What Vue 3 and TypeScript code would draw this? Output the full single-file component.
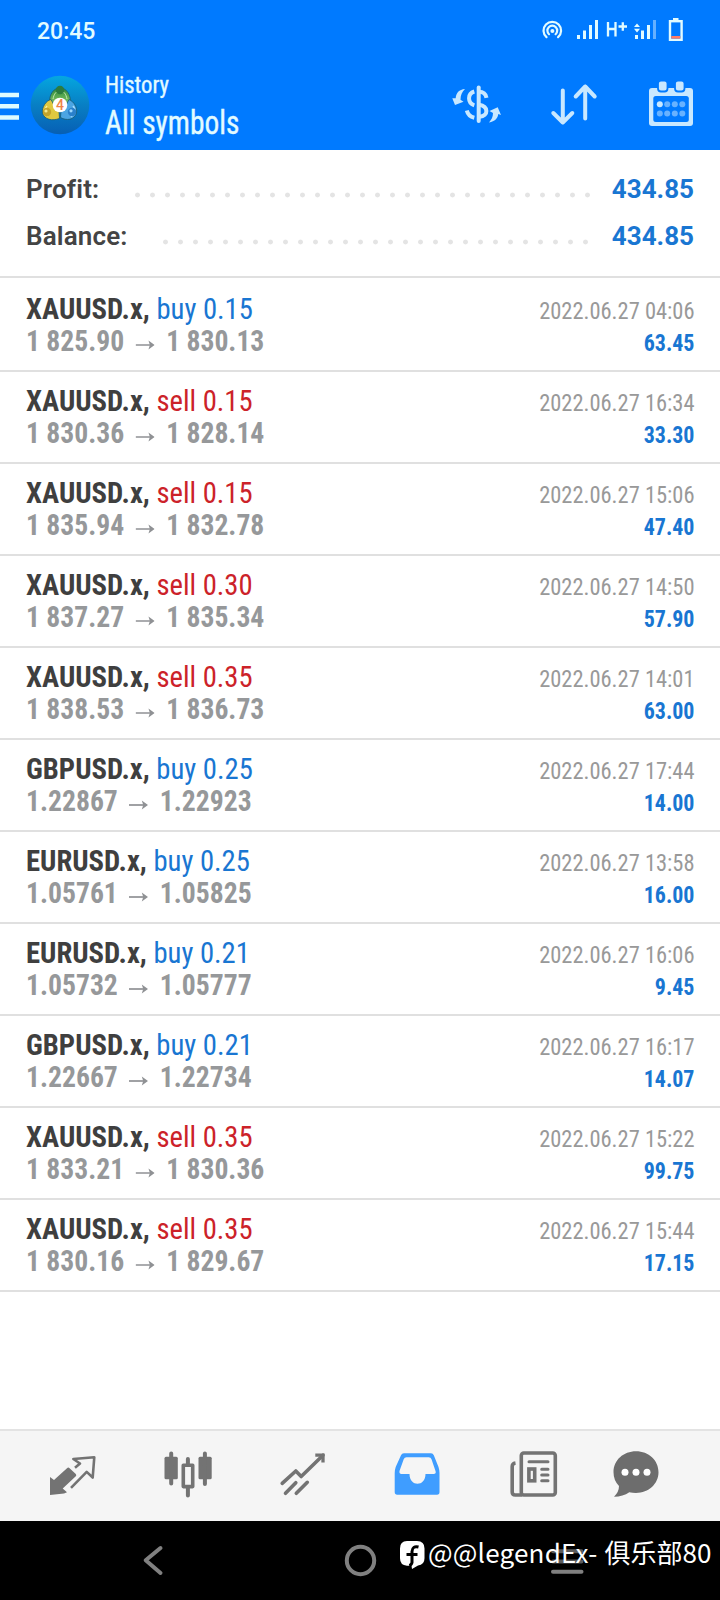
<script setup lang="ts">
interface Deal {
  symbol: string
  side: 'buy' | 'sell'
  volume: string
  open: string
  close: string
  time: string
  profit: string
}

const deal = (
  symbol: string, side: 'buy' | 'sell', volume: string,
  open: string, close: string, time: string, profit: string,
): Deal => ({ symbol, side, volume, open, close, time: `2022.06.27 ${time}`, profit })

const deals: Deal[] = [
  deal('XAUUSD.x', 'buy', '0.15', '1 825.90', '1 830.13', '04:06', '63.45'),
  deal('XAUUSD.x', 'sell', '0.15', '1 830.36', '1 828.14', '16:34', '33.30'),
  deal('XAUUSD.x', 'sell', '0.15', '1 835.94', '1 832.78', '15:06', '47.40'),
  deal('XAUUSD.x', 'sell', '0.30', '1 837.27', '1 835.34', '14:50', '57.90'),
  deal('XAUUSD.x', 'sell', '0.35', '1 838.53', '1 836.73', '14:01', '63.00'),
  deal('GBPUSD.x', 'buy', '0.25', '1.22867', '1.22923', '17:44', '14.00'),
  deal('EURUSD.x', 'buy', '0.25', '1.05761', '1.05825', '13:58', '16.00'),
  deal('EURUSD.x', 'buy', '0.21', '1.05732', '1.05777', '16:06', '9.45'),
  deal('GBPUSD.x', 'buy', '0.21', '1.22667', '1.22734', '16:17', '14.07'),
  deal('XAUUSD.x', 'sell', '0.35', '1 833.21', '1 830.36', '15:22', '99.75'),
  deal('XAUUSD.x', 'sell', '0.35', '1 830.16', '1 829.67', '15:44', '17.15'),
]

const summary = [
  { label: 'Profit:', value: '434.85', dots: 'dots-profit' },
  { label: 'Balance:', value: '434.85', dots: 'dots-balance' },
]
</script>

<template>
  <div class="screen">
    <header class="top">
      <div class="status">
        <span class="clock">20:45</span>
        <svg class="status-icons" width="150" height="30" viewBox="540 15 150 30">
          <g fill="none" stroke="#e2fbff" stroke-width="2.2" stroke-linecap="round">
            <path d="M546.5 37.2a8.8 8.8 0 1 1 11.6 0" />
            <path d="M549 34.2a4.9 4.9 0 1 1 6.6 0" />
          </g>
          <circle cx="552.4" cy="31" r="2" fill="#e2fbff" />
          <g fill="#e2fbff">
            <rect x="577" y="35" width="3" height="4" />
            <rect x="583" y="30.5" width="3" height="8.5" />
            <rect x="589" y="25" width="3" height="14" />
            <rect x="595" y="20" width="3" height="19" />
            <rect x="635" y="35" width="3" height="4" />
            <rect x="641" y="30.5" width="3" height="8.5" />
            <rect x="647" y="25" width="3" height="14" />
            <path d="M634 27l3-3.600 3 3.600zM634 28.800h6l-3 3.600z" />
            <rect x="673" y="18" width="5.500" height="3" />
          </g>
          <rect x="653" y="20" width="3" height="19" fill="#66b0ff" />
          <path d="M608 22v14.500M615.500 22v14.500M608 29h7.500M618.500 26.500h8.500M622.800 22.200v8.600" fill="none" stroke="#e2fbff" stroke-width="2.300" />
          <rect x="670" y="21.200" width="11.600" height="18.600" fill="none" stroke="#e2fbff" stroke-width="2.400" />
          <rect x="671.300" y="36" width="9" height="2.600" fill="#ff7a66" />
        </svg>
      </div>
      <div class="bar">
        <svg class="burger" width="20" height="30" viewBox="0 0 20 30">
          <path d="M0 3h19M0 14.300h19M0 25.500h19" stroke="#ddfaff" stroke-width="4.400" />
        </svg>
        <svg class="logo" width="60" height="60" viewBox="0 0 60 60">
          <defs>
            <linearGradient id="disc" x1="0" y1="0" x2="0" y2="1">
              <stop offset="0" stop-color="#05a7e0" />
              <stop offset=".5" stop-color="#087fc4" />
              <stop offset="1" stop-color="#075fb4" />
            </linearGradient>
            <linearGradient id="green" x1="0" y1="0" x2="0" y2="1">
              <stop offset="0" stop-color="#2e8a3c" />
              <stop offset="1" stop-color="#8fce6a" />
            </linearGradient>
          </defs>
          <circle cx="30" cy="30" r="29.300" fill="url(#disc)" />
          <g stroke="#165a72" stroke-width=".8">
            <path d="M30 13c7 0 10.500 7 10.500 14l-5 4H24l-4.500-4C19.500 20 23 13 30 13z" fill="url(#green)" />
            <path d="M21 24.500c-5 1-9.500 8-8.500 13.500 2 7 10 8 17 5.500L29 36l-5-6z" fill="#dfc83f" />
            <path d="M39 24.500c5 2 8.500 8 7.500 13.500-2 7-10 8-16 4.500L31 36l5-6z" fill="#4ba5e3" />
          </g>
          <path d="M23 24c1-5 3-8 7-8s6 3 7 8" fill="none" stroke="#c5ebb0" stroke-width="1" />
          <path d="M17 31c-3 3-2 8 1 10" fill="none" stroke="#fff09a" stroke-width="1.500" />
          <path d="M43 31c3 3 2 8-2 11" fill="none" stroke="#a6dcff" stroke-width="1.500" />
          <circle cx="30" cy="15" r="4.300" fill="#2c7c3e" />
          <circle cx="17" cy="37" r="4.200" fill="#c3a32b" />
          <circle cx="16" cy="36" r="1.600" fill="#f6e98b" />
          <circle cx="42" cy="37" r="4.200" fill="#2a80cb" />
          <circle cx="41" cy="35.800" r="1.600" fill="#9cd8ff" />
          <circle cx="30" cy="30" r="7.300" fill="#fff" />
          <text x="30" y="35" text-anchor="middle" font-size="14" font-weight="500" fill="#ee8448">4</text>
        </svg>
        <div class="titles">
          <span class="subtitle">History</span>
          <span class="title">All symbols</span>
        </div>
        <div class="actions">
          <svg width="56" height="50" viewBox="0 0 56 50">
            <g fill="none" stroke="#c9e8ff" stroke-width="4">
              <path d="M28.700 7.500v33.500" stroke-linecap="round" />
              <path d="M24.300 11.500c-7 2-7 11.500 0 13.800M29 11.800c4 0 6.700 2 7.500 6M29 24.800c9.500 1.500 10 11 .5 12M16.800 30.500c1 4 3.500 6.300 7.500 7.300" />
            </g>
            <g fill="#c9e8ff">
              <path d="M15 9c-6 .5-9 4-9.300 9.300H2.300L5 25l8.500-3.300-3-2C10.500 15 12 12 15 9z" />
              <path d="M39 42.500c6-1 8.800-4.500 9.300-8.500l2.700 1-3.300-7.700L39.500 31l3.500 2c0 4-1.500 6.500-4 9.500z" />
            </g>
          </svg>
          <svg width="56" height="50" viewBox="0 0 56 50">
            <g fill="none" stroke="#c9e8ff" stroke-width="4" stroke-linecap="round" stroke-linejoin="round">
              <path d="M14.800 10.500v32M5.300 33l9.500 9.500 9.500-9.500" />
              <path d="M37.200 38.500v-32M27.700 16.500l9.500-10 9.500 10" />
            </g>
          </svg>
          <svg width="56" height="50" viewBox="0 0 56 50">
            <rect x="3" y="8" width="44" height="38" rx="3" fill="#c9e8ff" />
            <rect x="7.300" y="16" width="35.500" height="26" rx="2.500" fill="#007aff" />
            <g fill="#c9e8ff" stroke="#007aff" stroke-width="1.800">
              <rect x="12" y=".5" width="9.500" height="11" rx="3" />
              <rect x="29" y=".5" width="9.500" height="11" rx="3" />
            </g>
            <circle cx="13.800" cy="24.200" r="3" fill="#c9e8ff" />
            <g fill="#68b2ff">
              <circle cx="21.200" cy="24.200" r="3" /><circle cx="28.800" cy="24.200" r="3" /><circle cx="36.300" cy="24.200" r="3" />
              <circle cx="13.800" cy="33.500" r="3" /><circle cx="21.200" cy="33.500" r="3" /><circle cx="28.800" cy="33.500" r="3" /><circle cx="36.300" cy="33.500" r="3" />
            </g>
          </svg>
        </div>
      </div>
    </header>

    <section class="summary">
      <div v-for="s in summary" :key="s.label" class="sum-row">
        <span class="sum-label">{{ s.label }}</span>
        <span class="dots" :class="s.dots"></span>
        <span class="sum-value">{{ s.value }}</span>
      </div>
    </section>

    <main class="deals">
      <div v-for="(d, i) in deals" :key="i" class="deal">
        <div class="left">
          <div class="line head"><b>{{ d.symbol }},</b> <span :class="d.side">{{ d.side }} {{ d.volume }}</span></div>
          <div class="line prices">
            <span>{{ d.open }}</span>
            <svg width="20" height="12" viewBox="0 0 20 12"><path d="M0 6h18" stroke="#8f9194" stroke-width="1.700" /><path d="M13.500 1.500L20 6l-6.500 4.500 1.500-4.500z" fill="#8f9194" /></svg>
            <span>{{ d.close }}</span>
          </div>
        </div>
        <div class="right">
          <div class="time">{{ d.time }}</div>
          <div class="profit">{{ d.profit }}</div>
        </div>
      </div>
    </main>

    <nav class="tabs">
      <svg width="50" height="50" viewBox="0 0 50 50">
        <path d="M3 26l4 3L20 17.200q1.300-1.200 2.600 0l6.200 5.800q1 1.300 0 2.300L15.700 37.500l4.300 3.800-3 1.200L3 43.900z" fill="#737373" />
        <path d="M24 36.800L39.700 20.900l6 5.600L47.300 6.200 26.300 8 33 12.500l-5 4.300" fill="none" stroke="#737373" stroke-width="2.600" stroke-linejoin="round" />
      </svg>
      <svg width="50" height="50" viewBox="0 0 50 50">
        <g fill="#737373">
          <rect x="1.500" y="5.700" width="13.300" height="22.600" rx="1.500" />
          <rect x="35.500" y="5.700" width="13.200" height="22.600" rx="1.500" />
        </g>
        <rect x="20.300" y="14.200" width="9.400" height="21.400" fill="none" stroke="#737373" stroke-width="3.600" stroke-linejoin="round" />
        <path d="M8.200 2.500v30M41.900 2.500v30.500M24.900 8v5M24.900 37v7.500" stroke="#737373" stroke-width="4" stroke-linecap="round" />
      </svg>
      <svg width="50" height="50" viewBox="0 0 50 50">
        <g fill="none" stroke="#737373" stroke-width="3.600" stroke-linecap="round" stroke-linejoin="round">
          <path d="M4.200 32.300L17.800 20l5.400 5.500L45 4.200" />
          <path d="M7.500 42.300l10.300-10.600M18.300 42.300l11-11" />
          <path d="M37.300 4.200H45v7.300" stroke-width="3.300" stroke-linecap="butt" stroke-linejoin="miter" />
        </g>
      </svg>
      <svg width="50" height="50" viewBox="0 0 50 50">
        <path fill-rule="evenodd" fill="#3f9dff" d="M12 2.300h27q2 0 2.800 2L46.500 16q1 3 1 6v19q0 2.700-2.500 2.700H5.200Q2.700 43.700 2.700 41V22q0-3 1-6L9 4.300q.8-2 3-2zM14.500 6.300q-2 0-2.800 2L7.500 20q-.5 3 2 3h8c0 13 16 13 16 0h8q3 0 2-3L39.500 8.300q-.7-2-2.800-2z" />
      </svg>
      <svg width="50" height="50" viewBox="0 0 50 50">
        <g fill="none" stroke="#737373" stroke-width="3.600" stroke-linecap="round">
          <rect x="12.300" y="2" width="34" height="42" rx="2.500" />
          <path d="M6.500 12q-3.300.5-3.300 3.500V41q0 3 3 3h7" stroke-linecap="butt" />
          <path d="M20 10.700h19M32.700 18.200H39M32.700 24H39M32.700 29.700H39" stroke-width="3" />
          <rect x="19.900" y="18" width="5.800" height="11.800" />
        </g>
      </svg>
      <svg width="50" height="50" viewBox="0 0 50 50">
        <path d="M25 .3c12.700 0 22.500 9 22.500 21 0 11.500-9.800 20.700-22.500 20.700q-3.500 0-6.700-.8Q12 45.500 3 45.700q5-4.700 5-10.700Q2.500 29.500 2.500 21.300C2.500 9 12.500.3 25 .3z" fill="#6d6d6d" />
        <g fill="#fff"><circle cx="14" cy="21.300" r="3.500" /><circle cx="25" cy="21.300" r="3.500" /><circle cx="36" cy="21.300" r="3.500" /></g>
      </svg>
    </nav>

    <footer class="system">
      <svg width="720" height="79" viewBox="0 1521 720 79">
        <g fill="none" stroke="#808080" stroke-width="4" stroke-linecap="round" stroke-linejoin="round">
          <path d="M160.500 1548l-14.800 12.300 14.800 12.700" />
          <circle cx="360.500" cy="1560.500" r="13.700" />
          <path d="M553 1551.300h28.500M553 1561.500h28.500" stroke="#5c5c5c" />
          <path d="M553 1571.700h28.500" />
        </g>
      </svg>
      <div class="watermark">
        <svg width="25" height="29" viewBox="0 0 25 29">
          <path d="M7 0h10q7.500 0 7.500 7.500v9.800q0 6.500-6.500 7.300l-6 3.400-.5-3.200H7q-7-.5-7-7.500V7.500Q0 0 7 0z" fill="#fff" />
          <path d="M18.500 6q-6-1.500-6.500 4.500v11q-.5 2.500-2.800 3M6.500 13.500h11" fill="none" stroke="#000" stroke-width="3" />
        </svg>
        <span class="handle">@@legendEx-</span><span class="club">俱乐部80</span>
      </div>
    </footer>
  </div>
</template>

<style>
body { margin: 0; background: #fff; }
</style>

<style scoped>
.screen {
  width: 720px;
  height: 1600px;
  display: flex;
  flex-direction: column;
  overflow: hidden;
  background: #fff;
  font-family: "Roboto", "Liberation Sans", sans-serif;
}
svg { display: block; flex: none; }

.top { height: 150px; background: #007aff; color: #e2fbff; }
.status {
  height: 60px;
  display: flex;
  justify-content: space-between;
  align-items: center;
  padding: 0 30px 0 37px;
  box-sizing: border-box;
}
.clock { font-size: 23px; font-weight: 500; line-height: 30px; padding-top: 3px; }
.bar { height: 90px; display: flex; align-items: center; }
.burger { margin-top: 3px; }
.logo { margin-left: 10px; }
.titles {
  margin: 2px 0 0 15px;
  display: flex;
  flex-direction: column;
  font-family: "Roboto Condensed", "Roboto";
  font-stretch: 75%;
  -webkit-text-stroke: 0.35px #e2fbff;
}
.subtitle { font-size: 24px; line-height: 34px; transform: scaleX(0.945); transform-origin: left; }
.title { font-size: 32.5px; line-height: 42px; transform: scaleX(0.905); transform-origin: left; }
.actions { margin-left: auto; margin-right: 18px; display: flex; gap: 42px; }

.summary { height: 126px; box-sizing: border-box; padding: 16px 26px 0; }
.sum-row { height: 47px; display: flex; align-items: center; font-size: 26px; font-weight: 700; line-height: 47px; }
.sum-label { color: #444; font-weight: 600; letter-spacing: 0.15px; }
.sum-value { color: #1976d2; width: 84px; text-align: right; }
.dots {
  height: 6px;
  margin: 10px 15px 0 auto;
  background: radial-gradient(circle at 7.5px 3px, #e4e4e4 2px, transparent 2.8px) 0 0 / 15px 6px repeat-x;
}
.dots-profit { width: 465px; }
.dots-balance { width: 435px; margin-right: 17px; }

.deals { font-family: "Roboto Condensed", "Roboto"; font-stretch: 75%; border-top: 2px solid #e0e0e0; }
.deal {
  height: 92px;
  box-sizing: border-box;
  border-bottom: 2px solid #e0e0e0;
  padding: 13px 26px 0;
  display: flex;
  justify-content: space-between;
}
.deal:first-child { height: 94px; padding-top: 15px; }
.line { font-size: 29px; line-height: 32px; height: 32px; white-space: nowrap; color: #3f3f3f; transform-origin: left; }
.head { transform: scaleX(0.988); }
.buy { color: #1976d2; }
.sell { color: #cc2229; }
.prices { display: flex; align-items: center; font-weight: 700; color: #96989a; transform: scaleX(0.953); }
.prices svg { margin: 8px 12px 0 12px; }
.right { text-align: right; font-size: 23.5px; line-height: 32px; padding-top: 2px; }
.time { color: #999; transform: scaleX(0.956); transform-origin: right; }
.profit { color: #1976d2; font-weight: 700; transform: scaleX(0.935); transform-origin: right; }

.tabs {
  margin-top: auto;
  height: 92px;
  box-sizing: border-box;
  border-top: 2px solid #e3e3e3;
  background: #f5f5f5;
  padding-left: 14px;
  display: grid;
  grid-template-columns: 116px 115px 115px 114px 119px 86px;
  align-items: center;
  justify-items: center;
}
.system { position: relative; height: 79px; background: #000; }
.watermark {
  position: absolute;
  left: 400px;
  top: 13px;
  display: flex;
  align-items: center;
  color: #fff;
  font-family: "Noto Sans CJK SC", sans-serif;
  font-size: 26px;
  line-height: 36px;
  white-space: nowrap;
}
.watermark svg { margin-top: 6px; }
.handle { margin-left: 3px; letter-spacing: 0.2px; }
.club { margin-left: 7px; }
</style>
